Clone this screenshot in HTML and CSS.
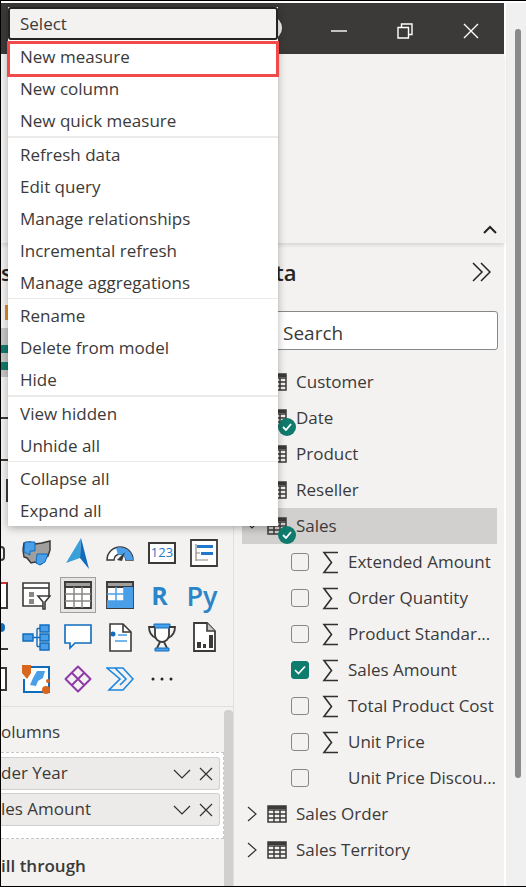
FILE: index.html
```html
<!DOCTYPE html>
<html lang="en">
<head>
    <meta charset="UTF-8">
    <title>Power BI Data pane menu</title>
    <link rel="stylesheet" href="styles.css">
</head>
<body>
    <svg class="defs" width="0" height="0">
        <symbol id="table" viewBox="0 0 20 18">
            <path d="M1 1h18v16H1z M1 5h18 M1 9h18 M1 13h18 M7 5v12 M13 5v12" fill="none" stroke="#3b3a39" stroke-width="1.5"/>
            <path d="M1 1h18v3H1z" fill="#3b3a39"/>
        </symbol>
        <symbol id="sigma" viewBox="0 0 17 23">
            <path d="M16 1.5H2l7.5 10L2 21.5h14" fill="none" stroke="#323130" stroke-width="1.6"/>
        </symbol>
    </svg>

    <div class="window">
        <div class="main">
            <div class="titlebar">
                <span class="win-circle"></span>
                <svg class="win-btn" width="16" height="16" viewBox="0 0 16 16"><path d="M0 8h16" stroke="#fff" stroke-width="1.4"/></svg>
                <svg class="win-btn" width="16" height="16" viewBox="0 0 16 16"><path d="M1 4.5h10.500v10.500H1z M4.500 4.500V1H15v10.500h-3.500" fill="none" stroke="#fff" stroke-width="1.4"/></svg>
                <svg class="win-btn" width="16" height="16" viewBox="0 0 16 16"><path d="M1 1l14 14M15 1L1 15" stroke="#fff" stroke-width="1.4"/></svg>
            </div>

            <div class="ribbon">
                <svg class="ribbon-up" width="14" height="9" viewBox="0 0 14 9"><path d="M1 8l6-6 6 6" fill="none" stroke="#252423" stroke-width="2"/></svg>
            </div>

            <div class="panes">
                <div class="viz-pane">
                    <div class="viz-head">s</div>
                    <div class="viz-behind">
                        <span class="stub-bar"></span>
                        <div class="stub-gray"><span></span><span></span></div>
                        <span class="stub-line"></span>
                        <span class="stub-line"></span>
                        <span class="stub-box"></span>
                    </div>

                    <div class="viz-grid">
                        <span class="stub-arc"></span>
                        <svg width="29" height="26" viewBox="0 0 29 26"><path d="M2 3l6-1 5 2 7-1 8-2v9l-2 6-4 3-3 5-6-2-4 1-4-5-3-1-1-7z" fill="#a19f9d" stroke="#3b3a39" stroke-width="1.500"/><path d="M3 2h10v9H8v4L2 12z M15 14h11l-3 8-5 3-4-2z" fill="#4a9fe8" stroke="#0f6cbd" stroke-width="1"/></svg>
                        <svg width="24" height="31" viewBox="0 0 24 31"><path d="M15 0L0 25l14-5z" fill="#3aa0da"/><path d="M15 0l8 31-9-11z" fill="#0f6cbd"/></svg>
                        <svg width="28" height="15" viewBox="0 0 28 15"><path d="M1 14a13 13 0 0 1 26 0h-7a6 6 0 0 0-12 0z" fill="#fff" stroke="#3b3a39" stroke-width="1.500"/><path d="M10 2a13 13 0 0 1 17 12h-7a6 6 0 0 0-8-5z" fill="#4a9fe8"/><path d="M11 14l8-8-3 9z" fill="#3b3a39"/></svg>
                        <div class="viz-card"><span>123</span></div>
                        <svg width="28" height="28" viewBox="0 0 28 28"><path d="M1 1h26v26H1z" fill="#fff" stroke="#3b3a39" stroke-width="1.800"/><path d="M7 6h16v3H7z M11 13h12v3H11z" fill="#1f78c8"/><path d="M6 5v17 M6 14h4 M6 21h12" stroke="#8a8886" stroke-width="1.200" fill="none"/></svg>

                        <span class="stub-report"></span>
                        <svg width="30" height="29" viewBox="0 0 30 29"><path d="M22 25H2V2h26v13" fill="#fff" stroke="#3b3a39" stroke-width="1.600"/><path d="M2 7h26" stroke="#3b3a39" stroke-width="1.600"/><path d="M8 11h5v5H8z M8 18h5v5H8z" fill="#8a8886"/><path d="M17 15h12l-5 6v7h-2v-7z" fill="#fff" stroke="#3b3a39" stroke-width="1.600"/></svg>
                        <div class="viz-selected"><svg width="28" height="28" viewBox="0 0 28 28"><path d="M1 1h26v26H1z" fill="#fff" stroke="#3b3a39" stroke-width="1.800"/><path d="M1 1h26v5H1z" fill="#a19f9d" stroke="#3b3a39" stroke-width="1.800"/><path d="M1 13h26 M1 20h26 M10 6v21 M18 6v21" stroke="#8a8886" stroke-width="1.500"/></svg></div>
                        <svg width="28" height="28" viewBox="0 0 28 28"><path d="M1 1h26v26H1z" fill="#fff" stroke="#3b3a39" stroke-width="1.800"/><path d="M1 1h26v5H1z" fill="#a19f9d" stroke="#3b3a39" stroke-width="1.800"/><path d="M18 6h9v21h-9z M1 20h17v7H1z" fill="#4a9fe8"/><path d="M1 13h26 M1 20h26 M10 6v21 M18 6v21" stroke="#4a9fe8" stroke-width="1.500"/></svg>
                        <span class="viz-letter viz-r">R</span>
                        <span class="viz-letter viz-py">Py</span>

                        <span class="stub-key"></span>
                        <svg width="28" height="27" viewBox="0 0 28 27"><path d="M1 10h10v7H1z M18 1h9v7h-9z M18 10h9v7h-9z M18 19h9v7h-9z" fill="#4a9fe8" stroke="#0f6cbd" stroke-width="1.400"/><path d="M11 13.500h7 M15 4.500v18 M15 4.500h3 M15 22.500h3" fill="none" stroke="#0f6cbd" stroke-width="1.400"/></svg>
                        <svg width="28" height="26" viewBox="0 0 28 26"><path d="M1 1h26v18H11l-5 5v-5H1z" fill="#fff" stroke="#0f6cbd" stroke-width="1.600"/></svg>
                        <svg width="23" height="29" viewBox="0 0 23 29"><path d="M1 1h13l8 8v19H1z" fill="#fff" stroke="#3b3a39" stroke-width="1.600"/><path d="M14 1v8h8" fill="none" stroke="#3b3a39" stroke-width="1.600"/><circle cx="4" cy="11" r="2.500" fill="#0f6cbd"/><path d="M9 12h9 M6 18h12" stroke="#4a9fe8" stroke-width="1.500"/></svg>
                        <svg width="28" height="29" viewBox="0 0 28 29"><path d="M7 2h14v10a7 7 0 0 1-14 0z" fill="#fff" stroke="#3b3a39" stroke-width="1.800"/><path d="M6 1h16v4H6z" fill="#4a9fe8" stroke="#0f6cbd" stroke-width="1"/><path d="M7 4H1c0 6 2 9 7 11 M21 4h6c0 6-2 9-7 11" fill="none" stroke="#3b3a39" stroke-width="1.800"/><path d="M12 19l-3 6 M16 19l3 6" fill="none" stroke="#3b3a39" stroke-width="1.800"/><path d="M7 25h14v3H7z" fill="#4a9fe8" stroke="#0f6cbd" stroke-width="1"/></svg>
                        <svg width="23" height="30" viewBox="0 0 23 30"><path d="M1 1h13l8 8v20H1z" fill="#fff" stroke="#3b3a39" stroke-width="1.800"/><path d="M14 1v8h8" fill="#c8c6c4" stroke="#3b3a39" stroke-width="1.600"/><path d="M4 20h4v6H4z M10 22h3v4h-3z M16 13h4v13h-4z" fill="#3b3a39"/></svg>

                        <span class="stub-num"></span>
                        <svg width="29" height="29" viewBox="0 0 29 29"><path d="M9 2h18v25H2V14" fill="#fff" stroke="#0f6cbd" stroke-width="2"/><path d="M15 6h8l-2 7-5 3-2 5-6-1 3-7z" fill="#4a9fe8"/><path d="M0 0h9v8l-4 6-5-6z" fill="#d9661f"/><circle cx="24" cy="25" r="4" fill="#d9661f"/><circle cx="26" cy="16" r="2" fill="#d9661f"/></svg>
                        <svg width="28" height="28" viewBox="0 0 28 28"><path d="M14 1.500L26.500 14 14 26.500 1.500 14z M8 8l12 12 M20 8L8 20" fill="none" stroke="#8f3aa8" stroke-width="2" stroke-linejoin="round"/></svg>
                        <svg width="28" height="24" viewBox="0 0 28 24"><path d="M1 1h16l10 11-10 11H3l11-11z M9 1l11 11-6 6" fill="none" stroke="#1a86e0" stroke-width="1.600"/></svg>
                        <svg width="22" height="4" viewBox="0 0 22 4"><path d="M2 2h.01M11 2h.01M20 2h.01" stroke="#252423" stroke-width="3" stroke-linecap="round"/></svg>
                    </div>

                    <div class="viz-fields">
                        <div class="fields-scroll"></div>
                        <div class="field-label">olumns</div>
                        <div class="well">
                            <div class="pill"><span class="pill-name">der Year</span><svg width="18" height="10" viewBox="0 0 18 10"><path d="M1 1l8 8 8-8" fill="none" stroke="#323130" stroke-width="1.200"/></svg><svg width="14" height="14" viewBox="0 0 14 14"><path d="M1 1l12 12M13 1L1 13" stroke="#323130" stroke-width="1.200"/></svg></div>
                            <div class="pill"><span class="pill-name">les Amount</span><svg width="18" height="10" viewBox="0 0 18 10"><path d="M1 1l8 8 8-8" fill="none" stroke="#323130" stroke-width="1.200"/></svg><svg width="14" height="14" viewBox="0 0 14 14"><path d="M1 1l12 12M13 1L1 13" stroke="#323130" stroke-width="1.200"/></svg></div>
                        </div>
                        <div class="field-heading">ill through</div>
                    </div>
                </div>

                <div class="data-pane">
                    <div class="data-head">
                        <span class="data-title">ta</span>
                        <svg width="19" height="20" viewBox="0 0 19 20"><path d="M1 1l9 9-9 9M9 1l9 9-9 9" fill="none" stroke="#252423" stroke-width="1.500"/></svg>
                    </div>
                    <div class="search">Search</div>

                    <ul class="tree">
                        <li class="row"><span class="chev"></span><svg class="tbl"><use href="#table"/></svg>Customer</li>
                        <li class="row"><span class="chev"></span><svg class="tbl"><use href="#table"/></svg><span class="badge"><svg width="10" height="8" viewBox="0 0 10 8"><path d="M1 4l3 3 5-6" fill="none" stroke="#fff" stroke-width="1.800"/></svg></span>Date</li>
                        <li class="row"><span class="chev"></span><svg class="tbl"><use href="#table"/></svg>Product</li>
                        <li class="row"><span class="chev"></span><svg class="tbl"><use href="#table"/></svg>Reseller</li>
                        <li class="row row-open"><svg class="chev" viewBox="0 0 12 18"><path d="M2 7l4 4 4-4" fill="none" stroke="#323130" stroke-width="1.200"/></svg><svg class="tbl"><use href="#table"/></svg><span class="badge"><svg width="10" height="8" viewBox="0 0 10 8"><path d="M1 4l3 3 5-6" fill="none" stroke="#fff" stroke-width="1.800"/></svg></span>Sales</li>
                        <li class="row row-field"><span class="box"></span><svg class="sigma"><use href="#sigma"/></svg>Extended Amount</li>
                        <li class="row row-field"><span class="box"></span><svg class="sigma"><use href="#sigma"/></svg>Order Quantity</li>
                        <li class="row row-field"><span class="box"></span><svg class="sigma"><use href="#sigma"/></svg>Product Standar...</li>
                        <li class="row row-field"><span class="box box-on"><svg width="12" height="10" viewBox="0 0 12 10"><path d="M1 5l3.500 3.500L11 1.500" fill="none" stroke="#fff" stroke-width="1.600"/></svg></span><svg class="sigma"><use href="#sigma"/></svg>Sales Amount</li>
                        <li class="row row-field"><span class="box"></span><svg class="sigma"><use href="#sigma"/></svg>Total Product Cost</li>
                        <li class="row row-field"><span class="box"></span><svg class="sigma"><use href="#sigma"/></svg>Unit Price</li>
                        <li class="row row-field"><span class="box"></span><span class="sigma"></span>Unit Price Discou...</li>
                        <li class="row"><svg class="chev" viewBox="0 0 12 18"><path d="M2 2l8 7-8 7" fill="none" stroke="#323130" stroke-width="1.200"/></svg><svg class="tbl"><use href="#table"/></svg>Sales Order</li>
                        <li class="row"><svg class="chev" viewBox="0 0 12 18"><path d="M2 2l8 7-8 7" fill="none" stroke="#323130" stroke-width="1.200"/></svg><svg class="tbl"><use href="#table"/></svg>Sales Territory</li>
                    </ul>
                </div>
            </div>
        </div>

        <div class="page-scroll"><div class="page-thumb"></div></div>
    </div>

    <div class="menu">
        <div class="menu-select">Select</div>
        <div class="menu-group menu-group-wide">
            <div class="menu-item menu-item-hl">New measure</div>
            <div class="menu-item">New column</div>
            <div class="menu-item">New quick measure</div>
        </div>
        <div class="menu-group">
            <div class="menu-item">Refresh data</div>
            <div class="menu-item">Edit query</div>
            <div class="menu-item">Manage relationships</div>
            <div class="menu-item">Incremental refresh</div>
            <div class="menu-item">Manage aggregations</div>
        </div>
        <div class="menu-group menu-group-wide">
            <div class="menu-item">Rename</div>
            <div class="menu-item">Delete from model</div>
            <div class="menu-item">Hide</div>
        </div>
        <div class="menu-group">
            <div class="menu-item">View hidden</div>
            <div class="menu-item">Unhide all</div>
        </div>
        <div class="menu-group">
            <div class="menu-item">Collapse all</div>
            <div class="menu-item">Expand all</div>
        </div>
    </div>
</body>
</html>
```
FILE: styles.css
```css
* {
    box-sizing: border-box;
}
html, body {
    margin: 0;
    height: 100%;
    overflow: hidden;
}
body {
    position: relative;
    background-color: #fff;
    color: #3b3a39;
    font-family: "Open Sans", "Noto Sans", sans-serif;
    font-size: 17px;
}
.defs {
    position: absolute;
}
.window {
    display: flex;
    height: 887px;
    padding-top: 2px;
    border-top: 1px solid #000;
    border-left: 1px solid #000;
    border-bottom: 1px solid #000;
}
.main {
    width: 503px;
    flex: none;
    display: flex;
    flex-direction: column;
    background-color: #f3f2f1;
}
.titlebar {
    height: 51px;
    flex: none;
    display: flex;
    justify-content: flex-end;
    align-items: center;
    gap: 50px;
    padding: 5px 25px 0 0;
    background-color: #3b3a39;
}
.win-circle {
    position: absolute;
    left: 262px;
    top: 17px;
    width: 20px;
    height: 22px;
    border-radius: 50%;
    background-color: #f3f2f1;
}
.ribbon {
    height: 189px;
    flex: none;
    display: flex;
    justify-content: flex-end;
    align-items: flex-end;
    padding: 0 7px 9px 0;
    box-shadow: 0 2px 4px rgba(0, 0, 0, 0.12);
    position: relative;
}
.panes {
    flex: 1;
    display: flex;
    min-height: 0;
}
.viz-pane {
    width: 233px;
    flex: none;
    overflow: hidden;
    border-right: 1px solid #e1dfdd;
}
.viz-head {
    height: 60px;
    padding-top: 14px;
    font-size: 22px;
    line-height: 30px;
    font-weight: 600;
    color: #252423;
}
.viz-behind {
    height: 229px;
    display: flex;
    flex-direction: column;
    align-items: flex-start;
}
.stub-bar {
    width: 7px;
    height: 15px;
    margin-top: 2px;
    border-right: 3px solid #e08a2b;
}
.stub-gray {
    width: 7px;
    height: 49px;
    margin-top: 8px;
    padding-top: 17px;
    display: flex;
    flex-direction: column;
    gap: 9px;
    background-color: #c8c6c4;
}
.stub-gray span {
    height: 8px;
    background-color: #0f7b6c;
}
.stub-line {
    width: 7px;
    height: 2px;
    margin-top: 40px;
    background-color: #3b3a39;
}
.stub-box {
    width: 7px;
    height: 23px;
    margin-top: 18px;
    border-right: 2px solid #3b3a39;
}
.viz-grid {
    display: grid;
    grid-template-columns: 14px repeat(5, 42px);
    grid-auto-rows: 42px;
    justify-items: center;
    align-items: center;
    height: 174px;
}
.stub-arc {
    justify-self: start;
    width: 4px;
    height: 15px;
    border: 2px solid #3b3a39;
    border-left: 0;
    border-radius: 0 8px 8px 0;
}
.stub-report {
    justify-self: start;
    width: 7px;
    height: 27px;
    border: 2px solid #3b3a39;
    border-left: 0;
    border-top-color: #d13438;
    background-color: #fff;
}
.stub-key {
    justify-self: start;
    align-self: end;
    width: 7px;
    height: 27px;
    margin-bottom: 8px;
    border-bottom: 2px solid #3b3a39;
}
.stub-key::before {
    content: "";
    display: block;
    width: 4px;
    height: 9px;
    border-radius: 0 4px 4px 0;
    background-color: #0f6cbd;
}
.stub-num {
    justify-self: start;
    width: 6px;
    height: 24px;
    border: 2px solid #3b3a39;
    border-left: 0;
    background-color: #fff;
}
.viz-selected {
    width: 36px;
    height: 36px;
    display: flex;
    align-items: center;
    justify-content: center;
    background-color: #e6e5e3;
    border: 1px solid #a19f9d;
}
.viz-card {
    width: 28px;
    height: 22px;
    border: 2px solid #3b3a39;
    background-color: #fff;
    color: #1f78c8;
    font-size: 13px;
    line-height: 17px;
    text-align: center;
}
.viz-letter {
    font-weight: 700;
    color: #2a86c8;
    line-height: 1;
}
.viz-r {
    font-size: 25px;
    margin-right: 5px;
}
.viz-py {
    font-size: 27px;
    font-weight: 600;
    margin-right: 4px;
}
.viz-fields {
    position: relative;
    height: 180px;
    border-top: 1px solid #e1dfdd;
    padding-top: 16px;
}
.fields-scroll {
    position: absolute;
    right: 0;
    top: 3px;
    bottom: 0;
    width: 9px;
    border-radius: 4px 4px 0 0;
    background-color: #d2d0ce;
}
.field-label {
    height: 29px;
    line-height: 18px;
}
.well {
    width: 223px;
    height: 87px;
    padding: 4px 3px 0 0;
    display: flex;
    flex-direction: column;
    gap: 3px;
    background-color: #fff;
    border: 1px dashed #c8c6c4;
    border-left: 0;
}
.pill {
    height: 33px;
    flex: none;
    display: flex;
    align-items: center;
    gap: 8px;
    padding-right: 6px;
    background-color: #edebe9;
    border: 1px solid #d2d0ce;
    border-left: 0;
    border-radius: 0 3px 3px 0;
}
.pill-name {
    flex: 1;
    padding-bottom: 2px;
}
.field-heading {
    margin-top: 16px;
    font-weight: 600;
    line-height: 22px;
}
.data-pane {
    flex: 1;
    min-width: 0;
    padding-left: 8px;
}
.data-head {
    height: 68px;
    display: flex;
    justify-content: space-between;
    align-items: center;
    padding: 0 13px 10px 33px;
}
.data-title {
    font-size: 22px;
    font-weight: 600;
    color: #252423;
}
.search {
    width: 256px;
    height: 39px;
    padding: 5px 0 0 40px;
    line-height: 32px;
    font-size: 19px;
    background-color: #fff;
    border: 1px solid #8a8886;
    border-radius: 3px;
}
.tree {
    list-style: none;
    margin: 14px 0 0;
    padding: 0;
}
.row {
    position: relative;
    width: 255px;
    height: 36px;
    padding-bottom: 2px;
    display: flex;
    align-items: center;
    white-space: nowrap;
}
.row-open {
    background-color: #d2d0ce;
}
.chev {
    width: 12px;
    height: 18px;
    margin: 2px 9px 0 4px;
    flex: none;
}
.tbl {
    width: 20px;
    height: 18px;
    margin: 2px 9px 0 0;
    flex: none;
}
.badge {
    position: absolute;
    left: 36px;
    top: 18px;
    width: 18px;
    height: 18px;
    display: flex;
    align-items: center;
    justify-content: center;
    border-radius: 50%;
    background-color: #0f7b6c;
}
.row-field {
    padding-left: 49px;
}
.box {
    width: 18px;
    height: 18px;
    margin: 2px 13px 0 0;
    flex: none;
    display: flex;
    align-items: center;
    justify-content: center;
    background-color: #f3f2f1;
    border: 1px solid #8a8886;
    border-radius: 3px;
}
.box-on {
    background-color: #0f7b6c;
    border-color: #0f7b6c;
}
.sigma {
    width: 17px;
    height: 23px;
    margin: 2px 9px 0 0;
    flex: none;
}
.page-scroll {
    flex: 1;
    background-color: #f0f0f0;
    padding: 26px 0 0 9px;
    border-left: 2px solid #fff;
}
.page-thumb {
    width: 6px;
    height: 749px;
    border-radius: 3px;
    background-color: #8a8a8a;
}
.menu {
    position: absolute;
    left: 8px;
    top: 7px;
    width: 270px;
    height: 519px;
    background-color: #fff;
    box-shadow: 0 2px 8px rgba(0, 0, 0, 0.3);
}
.menu-select {
    height: 33px;
    padding-left: 10px;
    line-height: 29px;
    background-color: #f3f2f1;
    border: 2px solid #252423;
    border-radius: 3px;
}
.menu-group {
    border-bottom: 1px solid #edebe9;
}
.menu-group-wide {
    border-bottom-width: 2px;
}
.menu-group:last-child {
    border-bottom: 0;
}
.menu-item {
    position: relative;
    height: 32px;
    padding-left: 12px;
    line-height: 33px;
    white-space: nowrap;
}
.menu-item-hl::after {
    content: "";
    box-sizing: border-box;
    position: absolute;
    left: -1px;
    right: -1px;
    top: 1px;
    height: 36px;
    border: 3px solid #f04a4a;
}
```
